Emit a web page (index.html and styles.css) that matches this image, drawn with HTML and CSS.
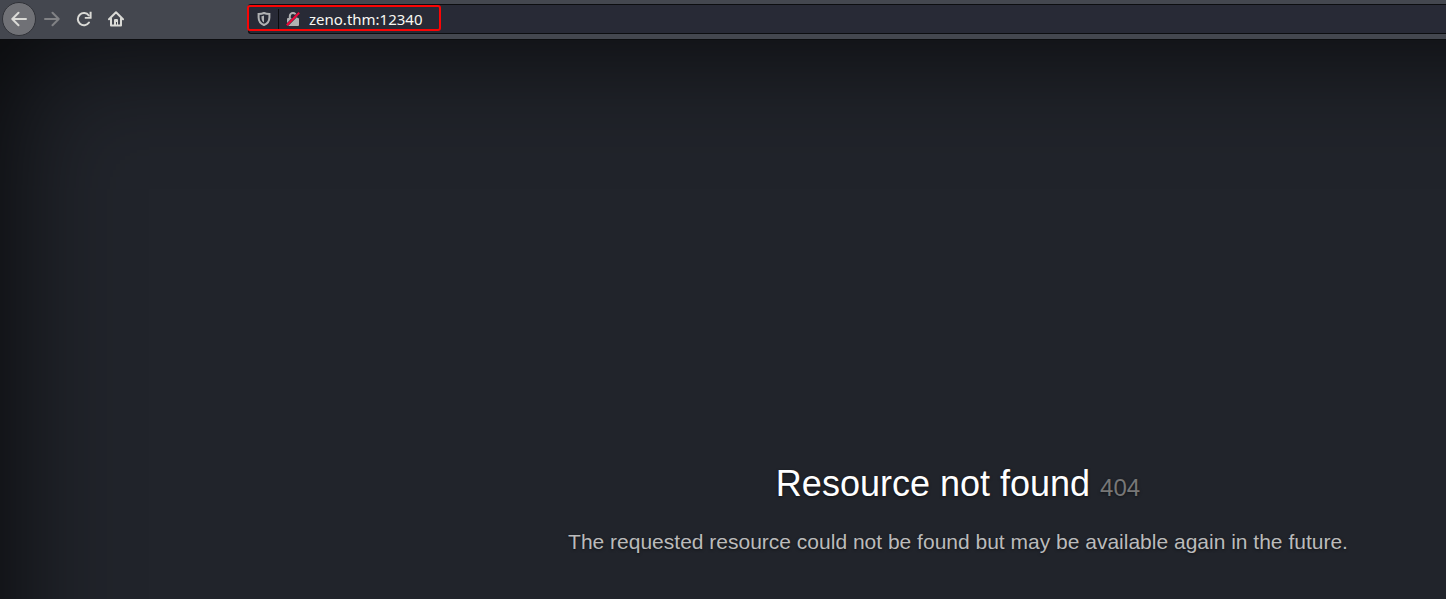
FILE: index.html
```
<!DOCTYPE html>
<html lang="en">
<head>
<meta charset="utf-8">
<title>Resource not found</title>
<link rel="stylesheet" href="styles.css">
</head>
<body>
<header class="toolbar">
  <nav class="nav-buttons" aria-label="Browser navigation">
    <button class="nav-button nav-back" type="button" aria-label="Back">
      <svg class="icon" viewBox="0 0 16 16"><path d="M15 8H1.500M7.500 1.800L1.300 8l6.200 6.200"/></svg>
    </button>
    <button class="nav-button" type="button" aria-label="Forward" disabled>
      <svg class="icon" viewBox="0 0 16 16"><path d="M1 8h13.500M8.500 1.800L14.700 8l-6.200 6.200"/></svg>
    </button>
    <button class="nav-button" type="button" aria-label="Reload">
      <svg class="icon" viewBox="0 0 16 16"><path d="M13 11.500A6.100 6.100 0 1 1 12.800 4.500"/><path class="solid" d="M15.600 0.800v6.400a.6.600 0 0 1-.6.600H8.800V6h4.800V.8z"/></svg>
    </button>
    <button class="nav-button" type="button" aria-label="Home">
      <svg class="icon" viewBox="0 0 16 16"><path d="M1 8.300L8 1.300l7 7M3 7.500V14.500h10V7.500"/><path class="solid" d="M6 14V9a1 1 0 0 1 1-1h2a1 1 0 0 1 1 1V14H9v-3H8v3z"/></svg>
    </button>
  </nav>
  <div class="url-bar">
    <div class="highlight">
      <button class="url-button shield" type="button" aria-label="Tracking protection">
        <svg class="icon-small" viewBox="0 0 14 14"><path d="M7 1C5.500 1.700 3.500 2 1.600 2v3.500c0 3.500 1.800 6 5.400 7.500 3.600-1.500 5.400-4 5.400-7.500V2C10.500 2 8.500 1.700 7 1z"/><path class="solid" d="M7 3.500C6.300 3.900 5.400 4.100 4.500 4.200v1.600c0 2.200.8 3.700 2.500 4.800z"/></svg>
      </button>
      <button class="url-button lock" type="button" aria-label="Connection is not secure">
        <svg class="icon-small" viewBox="0 0 14 14"><path d="M3.800 7V4.300a3.200 3.200 0 0 1 6.400 0V7"/><path class="solid" d="M2 6h10a1 1 0 0 1 1 1v6a1 1 0 0 1-1 1H2a1 1 0 0 1-1-1V7a1 1 0 0 1 1-1z"/><path class="gap" d="M.5 13.500L13.500 .5"/><path class="slash" d="M.8 13.200L13.200 .8"/></svg>
      </button>
      <input class="url-input" type="text" value="zeno.thm:12340" aria-label="Address">
    </div>
  </div>
</header>
<main class="cover">
  <h1 class="title">Resource not found <small class="code">404</small></h1>
  <p class="lead">The requested resource could not be found but may be available again in the future.</p>
</main>
</body>
</html>
```
FILE: styles.css
```
* { box-sizing: border-box; }

body {
  margin: 0;
  min-height: 100vh;
  display: flex;
  flex-direction: column;
  overflow: hidden;
  background: #21242b;
  font-family: "Liberation Sans", Arial, sans-serif;
}

button {
  padding: 0;
  border: 0;
  background: none;
  color: inherit;
}

.toolbar {
  display: flex;
  align-items: center;
  height: 40px;
  padding: 0 0 1px 2px;
  background: #44474f;
  border-bottom: 1px solid #0c0d10;
  color: #dadad6;
}

.nav-buttons {
  display: flex;
  flex: none;
  width: 246px;
}

.nav-button {
  display: grid;
  place-items: center;
  width: 32px;
  height: 34px;
  border-radius: 50%;
}

.nav-back {
  width: 34px;
  background: #707176;
  border: 1px solid #303238;
}

.nav-button:disabled { color: #818285; }

.icon {
  width: 16px;
  height: 16px;
  fill: none;
  stroke: currentColor;
  stroke-width: 2;
  stroke-linecap: round;
  stroke-linejoin: round;
}

.icon-small {
  width: 14px;
  height: 14px;
  fill: none;
  stroke: currentColor;
  stroke-width: 2;
}

.solid {
  fill: currentColor;
  stroke: none;
}

.gap {
  stroke: #282a36;
  stroke-width: 3;
}

.slash { stroke: #f0083c; }

.url-bar {
  flex: 1;
  height: 30px;
  background: #282a36;
  border: 1px solid #0c0d10;
  border-right: 0;
  border-radius: 3px 0 0 3px;
}

.highlight {
  display: flex;
  align-items: center;
  width: 194px;
  height: 26px;
  margin-left: -2px;
  padding-top: 2px;
  border: 2px solid #fa0505;
  border-radius: 3px;
}

.url-button {
  display: grid;
  place-items: center;
  height: 20px;
  color: #b0b1b3;
}

.shield {
  width: 30px;
  border-right: 1px solid #0c0d10;
}

.lock { width: 28px; }

.url-input {
  flex: 1;
  min-width: 0;
  height: 20px;
  padding: 0 0 0 2px;
  border: 0;
  outline: 0;
  background: none;
  color: #f8f8f2;
  font: 15px "Noto Sans", sans-serif;
}

.cover {
  position: relative;
  flex: 1;
  padding: 423px 0 40px 470px;
  overflow: hidden;
  text-align: center;
  text-shadow: 0 1px 3px rgba(0, 0, 0, 0.5);
}

/* Vignette along the top and left edges; the other two lie past the window. */
.cover::before {
  content: "";
  position: absolute;
  inset: 0 -200px -200px 0;
  box-shadow: inset 0 0 125px rgba(0, 0, 0, 0.85);
  pointer-events: none;
}

.title {
  margin: 0;
  color: #fff;
  font-size: 36px;
  font-weight: 400;
  line-height: 42px;
}

.code {
  color: #777;
  font-size: 24px;
}

.lead {
  margin: 18px 0 0;
  color: #bbb;
  font-size: 21px;
  line-height: 30px;
}
```
